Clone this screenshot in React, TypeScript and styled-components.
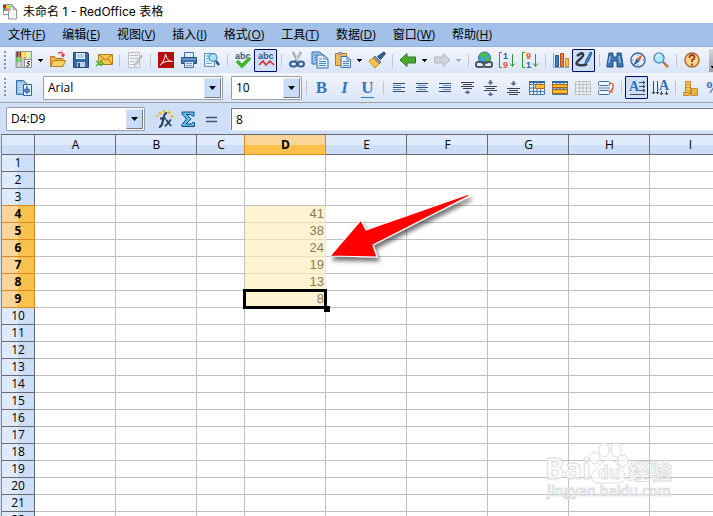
import React from "react";
import styled, { createGlobalStyle, css } from "styled-components";

const Global = createGlobalStyle`
  * { box-sizing: border-box; }
  body { margin: 0; background: #fff; }
  body, button, input, select {
    font-family: "Open Sans", "Noto Sans CJK SC", sans-serif;
    font-size: 12px;
    color: #000;
  }
`;

const Window = styled.div`
  display: flex;
  flex-direction: column;
  height: 100vh;
  overflow: hidden;
`;

const TitleBar = styled.header`
  display: flex;
  align-items: center;
  gap: 5px;
  height: 23px;
  padding: 0 2px;
  background: #fff;
  flex: none;
  h1 {
    margin: 0;
    font: 400 12px/22px Inter, "Noto Sans CJK SC", sans-serif;
  }
`;

const MenuBar = styled.nav`
  display: flex;
  gap: 17px;
  height: 23px;
  padding: 0 8px;
  background: #a2c0e8;
  flex: none;
`;

const MenuItem = styled.button`
  padding: 0;
  border: 0;
  background: none;
  line-height: 22px;
  white-space: nowrap;
`;

const Toolbar = styled.div<{ $tall?: boolean }>`
  display: flex;
  align-items: center;
  height: ${(p) => (p.$tall ? 29 : 27)}px;
  padding-left: 4px;
  background: linear-gradient(#f3f5fb, #d9e5f8);
  border-top: ${(p) => (p.$tall ? "0" : "1px solid #8fb0e0")};
  overflow: hidden;
  flex: none;
`;

const Grip = styled.span`
  width: 2px;
  height: 19px;
  margin-right: 6px;
  background: repeating-linear-gradient(#8b93a3 0 2px, transparent 2px 4px);
  flex: none;
`;

const ToolButton = styled.button<{ $on?: boolean }>`
  display: flex;
  align-items: center;
  justify-content: center;
  width: 23px;
  height: 23px;
  padding: 0;
  border: ${(p) => (p.$on ? "1px solid #000d5e" : "0")};
  border-radius: 1px;
  background: ${(p) => (p.$on ? "#cfdff8" : "none")};
  flex: none;
  svg { flex: none; overflow: visible; }
`;

const DropButton = styled.button`
  display: flex;
  align-items: center;
  justify-content: center;
  width: 11px;
  height: 23px;
  padding: 0;
  border: 0;
  background: none;
  flex: none;
`;

const Separator = styled.span`
  width: 8px;
  height: 13px;
  background: linear-gradient(#c2c6cd, #c2c6cd) center / 1px 100% no-repeat;
  flex: none;
`;

const Field = styled.div<{ $width: number; $gap?: number }>`
  display: flex;
  width: ${(p) => p.$width}px;
  height: 24px;
  margin-left: ${(p) => p.$gap || 0}px;
  padding: 1px;
  border: 1px solid #9a9da3;
  border-radius: 1px;
  background: #fff;
  flex: none;
  input, select {
    flex: 1;
    min-width: 0;
    padding: 0 3px;
    border: 0;
    outline: 0;
    appearance: none;
    background: #fff;
  }
`;

const FieldArrow = styled.button`
  display: flex;
  align-items: center;
  justify-content: center;
  width: 17px;
  padding: 0;
  border: 1px solid #dce8fa;
  border-right-color: #777b83;
  border-bottom-color: #777b83;
  background: #c8dbf7;
`;

const FormulaBar = styled.div`
  display: flex;
  align-items: center;
  height: 32px;
  padding-left: 6px;
  background: #cfdff7;
  border-top: 1px solid #9da1a8;
  flex: none;
`;

const FormulaTools = styled.div`
  display: flex;
  padding: 0 9px 0 8px;
`;

const FormulaInput = styled.input`
  flex: 1;
  min-width: 0;
  height: 22px;
  padding: 0 4px;
  border: 0;
  border-top: 1px solid #74777c;
  border-left: 1px solid #74777c;
  box-shadow: 0 0 0 1px #e3ebf7;
  outline: 0;
`;

const Sheet = styled.main`
  position: relative;
  flex: 1;
  min-height: 0;
  overflow: hidden;
  padding-left: 1px;
  background: #cfdff7;
`;

const Grid = styled.table`
  table-layout: fixed;
  width: 1px;
  border-collapse: separate;
  border-spacing: 0;
  border-top: 1px solid #64676c;
  border-left: 1px solid #85878b;
  background: #fff;
`;

const Col = styled.col<{ $width: number }>`
  width: ${(p) => p.$width}px;
`;

const headCell = css`
  padding: 0;
  font-size: 12px;
  text-align: center;
  line-height: 16px;
`;

const ColumnHead = styled.th<{ $selected?: boolean; $before?: boolean }>`
  ${headCell}
  height: 20px;
  padding-left: 1px;
  font-weight: ${(p) => (p.$selected ? 700 : 400)};
  background: ${(p) =>
    p.$selected
      ? "linear-gradient(#f9d698 50%, #fac14d 50%)"
      : "linear-gradient(#dfeafb 50%, #cddff8 50%)"};
  border-right: 1px solid ${(p) => (p.$selected || p.$before ? "#d88a20" : "#686a6e")};
  border-bottom: 1px solid ${(p) => (p.$selected ? "#d88a20" : "#686a6e")};
`;

const RowHead = styled.th<{ $selected?: boolean; $before?: boolean }>`
  ${headCell}
  height: 17px;
  font-weight: ${(p) => (p.$selected ? 700 : 400)};
  background: ${(p) =>
    p.$selected
      ? "linear-gradient(90deg, #f9d698 50%, #fac14d 50%)"
      : "linear-gradient(90deg, #dfeafb 50%, #cddff8 50%)"};
  border-right: 1px solid ${(p) => (p.$selected ? "#d88a20" : "#686a6e")};
  border-bottom: 1px solid ${(p) => (p.$selected || p.$before ? "#d88a20" : "#686a6e")};
`;

const Cell = styled.td<{ $selected?: boolean; $active?: boolean }>`
  height: 17px;
  padding: 0 1px 0 0;
  border-right: 1px solid #c0c0c0;
  border-bottom: 1px solid #c0c0c0;
  font: 13px/16px "Liberation Sans", Arial, sans-serif;
  text-align: right;
  ${(p) =>
    p.$selected &&
    css`
      color: #8b7b5c;
      background: #fdf3d1;
      border-right-color: #fbe9a6;
      border-bottom-color: #e9dfbd;
    `}
  ${(p) =>
    p.$active &&
    css`
      position: relative;
      &::before {
        content: "";
        position: absolute;
        inset: -2px;
        border: 3px solid #000;
      }
      &::after {
        content: "";
        position: absolute;
        right: -5px;
        bottom: -5px;
        width: 6px;
        height: 6px;
        background: #000;
      }
    `}
`;

const Pointer = styled.svg`
  position: absolute;
  left: 320px;
  top: 50px;
  pointer-events: none;
`;

const Watermark = styled.svg`
  position: absolute;
  left: 540px;
  top: 300px;
  pointer-events: none;
`;

const Down = ({ muted }: { muted?: boolean }) => (
  <svg width="5" height="3" viewBox="0 0 5 3" shapeRendering="crispEdges" aria-hidden="true">
    <path d="M0 0h5L2.5 3z" fill={muted ? "#a5a8ad" : "#000"} />
  </svg>
);

const BigDown = () => (
  <svg width="7" height="4" viewBox="0 0 7 4" aria-hidden="true">
    <path d="M0 0h7L3.500 4z" fill="#000" />
  </svg>
);

const Page = () => (
  <>
    <path d="M1 1h8l3 3v9H1z" fill="#9cc5f0" stroke="#336ca8" />
    <path d="M6 4h7l4 4v9H6z" fill="#e3f0fc" stroke="#336ca8" />
    <path d="M13 4v4h4M8 8h3M8 10.500h7M8 12.500h7M8 14.500h7M3 4h3M3 6.500h2M3 9h2" fill="none" stroke="#4c86c0" />
  </>
);

const Lines = ({ rows }: { rows: number[][] }) => (
  <g>
    {rows.map(([x, w], i) => (
      <path key={i} d={`M${x} ${4.5 + i * 2}h${w}`} stroke={i % 2 ? "#638bb5" : "#27507c"} />
    ))}
  </g>
);

const TableShape = ({ fill, line }: { fill: string; line: string }) => (
  <>
    <path d="M1.500 2.500h15v13h-15z" fill={fill} stroke={line} />
    <path d="M2 5.500h14M2 9h14M2 12.500h14M5.500 3v12M9 3v12M12.500 3v12" stroke={line} />
  </>
);

const art: Record<string, React.ReactNode> = {
  new: (
    <>
      <path d="M1 1h5v5H1z" fill="#9c222c" />
      <path d="M6 1h5v5H6z" fill="#f0e51f" />
      <path d="M11 1h5v5h-5z" fill="#dfe9b0" />
      <path d="M1 6h5v5H1z" fill="#56cf38" />
      <path d="M6 6h5v5H6z" fill="#ed8eac" />
      <path d="M11 6h5v4h-5z" fill="#c4e8a5" />
      <path d="M1 11h5v5H1z" fill="#a7c9b4" />
      <path d="M6 11h4v5H6z" fill="#d7a2a9" />
      <path d="M4 1v15M8 1v15M13 1v9" stroke="#fff" strokeOpacity=".35" strokeWidth="2" />
      <path d="M1 .5h15.500v16H1z" fill="none" stroke="#8f9992" />
      <path d="M9.500 8.500h7v8h-7z" fill="#fff" stroke="#87919b" />
      <path d="M15 10.500h-2l-1 1.500 2.500 1-1 2h-2.500" fill="none" stroke="#222" />
    </>
  ),
  open: (
    <>
      <path d="M1.500 15.500V5.500h4l1.500 2h7v3" fill="#ecb350" stroke="#ad761e" />
      <path d="M1.500 15.500l3-6h12l-2.500 6z" fill="#fbd064" stroke="#b87d1b" />
      <path d="M9 2.500q4-3 5.500 1.500" fill="none" stroke="#e33b32" strokeWidth="1.200" />
      <path d="M11.500 3.500h5l-2.500 3z" fill="#e33b32" />
    </>
  ),
  save: (
    <>
      <path d="M1.500 1.500h14l1 1v14H1.500z" fill="#326ba5" stroke="#23476f" />
      <path d="M4 2h9v6H4z" fill="#e9f1f9" />
      <path d="M5 4h7M5 6h7" stroke="#83a6cb" />
      <path d="M5 11h8v5H5z" fill="#bfd3e8" />
      <path d="M6 12h2v4H6z" fill="#274e7d" />
    </>
  ),
  mail: (
    <>
      <path d="M3.500 3.500h14v10h-14z" fill="#f9c84a" stroke="#b27d1d" />
      <path d="M4 4l6.500 5L17 4M4 13l4-5M17 13l-4-5" fill="none" stroke="#ad781d" />
      <path d="M1 10l3 2.500L1 15M5 10l3 2.500L5 15" fill="none" stroke="#3eb535" strokeWidth="1.500" />
    </>
  ),
  edit: (
    <>
      <path d="M2.500 1.500h11v15h-11z" fill="#eff1f4" stroke="#babec4" />
      <path d="M4 4.500h8M4 7.500h8M4 10.500h5M4 13.500h4" stroke="#b9bdc3" />
      <path d="M15.500 4L9 13l-1 2 2-1 6.500-9z" fill="#cfd2d7" stroke="#b0b4ba" />
    </>
  ),
  pdf: (
    <>
      <path d="M1 1h16v16H1z" fill="#b90d0d" />
      <path d="M3 14c2-1 5-6 5.500-11 1 5 4 8 7 7.500-4-1-9 0-12.500 3.500z" fill="none" stroke="#fff" />
    </>
  ),
  print: (
    <>
      <path d="M4.500 1.500h9v5h-9z" fill="#e2edf8" stroke="#456f9e" />
      <path d="M1.500 6.500h15v6h-15z" fill="#3c77b2" stroke="#264e7c" />
      <path d="M2 8h14" stroke="#88b4df" />
      <path d="M4.500 10.500h9v6h-9z" fill="#e7f0f8" stroke="#426c99" />
      <path d="M6 12.500h6M6 14.500h6" stroke="#7195bb" />
    </>
  ),
  preview: (
    <>
      <path d="M1.500 2.500h10v13h-10z" fill="#e9f3fd" stroke="#5b90c6" />
      <path d="M3 5h5M3 7.500h3M3 10h3M3 12.500h6" stroke="#6fa1d2" />
      <circle cx="10" cy="6.500" r="4" fill="#a4e1fb" stroke="#3b7dad" />
      <path d="M13 10l3 4" stroke="#2d5277" strokeWidth="2.500" />
    </>
  ),
  cut: (
    <>
      <path d="M5 1l5 9M13 1l-6 10" stroke="#98a2ab" strokeWidth="2.500" />
      <path d="M6 1l5 9M12 2L8 9" stroke="#dce1e5" />
      <ellipse cx="5.500" cy="13" rx="3.500" ry="2.500" fill="none" stroke="#315f95" strokeWidth="2" />
      <ellipse cx="13" cy="13" rx="3" ry="2.500" fill="none" stroke="#315f95" strokeWidth="2" />
    </>
  ),
  copy: <Page />,
  paste: (
    <>
      <path d="M1.500 2.500h11v12h-11z" fill="#f3bc57" stroke="#a97b2d" />
      <path d="M4 1h5v3H4z" fill="#93a2b1" />
      <path d="M7 5.500h6l3.500 3.500v7.500H7z" fill="#e2effb" stroke="#3b70a9" />
      <path d="M13 6v3h3M9 10.500h6M9 12.500h6M9 14.500h6" fill="none" stroke="#4d84bd" />
    </>
  ),
  brush: (
    <>
      <path d="M16 1l1.500 1.500-5 6-3-3z" fill="#315f98" stroke="#244777" />
      <path d="M7 5l6 6-2 2-6-6z" fill="#8597ad" stroke="#5a6b82" />
      <path d="M5 7l6 6-4 4-6-7z" fill="#fcc344" stroke="#c78b20" />
    </>
  ),
  back: <path d="M1 9l7-6.500V6h8.500v6H8v3.500z" fill="#4aa92c" stroke="#277c1b" />,
  forward: <path d="M17 9l-7-6.500V6H1.500v6H10v3.500z" fill="#ced1d6" stroke="#b6bac0" />,
  link: (
    <>
      <circle cx="9.500" cy="7" r="6" fill="#36a7df" stroke="#23709d" />
      <path d="M5 3l5-2 2 3-3 3-3 0zM11 7l4-1-1 5-3 1z" fill="#58c034" />
      <rect x="1" y="11" width="8" height="5" rx="2" fill="none" stroke="#50565e" strokeWidth="2" />
      <rect x="9" y="11" width="8" height="5" rx="2" fill="none" stroke="#50565e" strokeWidth="2" />
    </>
  ),
  chart: (
    <>
      <path d="M1.500 2v14.500H17" fill="none" stroke="#88a3bd" />
      <path d="M3.500 4.500h3v11h-3z" fill="#3b84ca" stroke="#24578e" />
      <path d="M8.500 2.500h3v13h-3z" fill="#f37a2c" stroke="#bf4a16" />
      <path d="M13.500 7.500h3v8h-3z" fill="#fac73c" stroke="#c88c19" />
    </>
  ),
  draw: (
    <>
      <path d="M2 5q5-4 6-2t-4 6 0 5 8-1" fill="none" stroke="#333b44" strokeWidth="2.500" />
      <path d="M15.500 1L17 2l-4 9-3 2 1-4z" fill="#448bd0" stroke="#275989" />
    </>
  ),
  find: (
    <>
      <path d="M3 2h4v4h4V2h4l2 12v2h-6v-6H7v6H1v-2z" fill="#3b78b5" stroke="#264e7d" />
      <path d="M4 5l-1 7M13 5l1 7" stroke="#94bee6" strokeWidth="1.500" />
    </>
  ),
  compass: (
    <>
      <circle cx="9" cy="9" r="7" fill="#e7f1fb" stroke="#416c9d" strokeWidth="1.500" />
      <path d="M9 3v2M9 13v2M3 9h2M13 9h2" stroke="#7a96b4" />
      <path d="M14 3L10.500 10.500 7.500 7.500z" fill="#e36a32" />
      <path d="M4 15l3.500-7.500 3 3z" fill="#2a65a7" />
    </>
  ),
  zoom: (
    <>
      <circle cx="7" cy="7" r="5" fill="#b1e7fb" stroke="#5298bd" strokeWidth="1.500" />
      <path d="M4 6q1-3 4-3" fill="none" stroke="#fff" />
      <path d="M11 11l2 2" stroke="#59748f" strokeWidth="2" />
      <path d="M12.500 12.500l3.500 3.500" stroke="#b97c42" strokeWidth="2.500" />
    </>
  ),
  help: (
    <>
      <circle cx="9" cy="9" r="7" fill="#fad68b" stroke="#ad6b36" strokeWidth="1.500" />
      <path d="M6.500 7q0-3 2.500-3t2.500 2.500Q11.500 8 9 9v2" fill="none" stroke="#a93b22" strokeWidth="1.800" />
      <path d="M8 12.500h2v2H8z" fill="#a93b22" />
    </>
  ),
  styles: (
    <>
      <path d="M1.500 1.500h7l3 3v11h-10z" fill="#92bee9" stroke="#356da6" />
      <path d="M3 5h6M3 7.500h6M3 10h6M3 12.500h6" stroke="#dceafa" />
      <path d="M8.500 5.500h8v11h-8z" fill="#e3f0fd" stroke="#366698" />
      <path d="M12 7v3M10 10.500h4v2h-4zM12 13v2" fill="none" stroke="#33679c" strokeWidth="1.500" />
    </>
  ),
  left: <Lines rows={[[3, 12], [3, 8], [3, 12], [3, 8], [3, 12]]} />,
  center: <Lines rows={[[3, 12], [5, 8], [3, 12], [5, 8], [3, 12]]} />,
  right: <Lines rows={[[3, 12], [7, 8], [3, 12], [7, 8], [3, 12]]} />,
  top: (
    <>
      <path d="M2 3.500h13M4 5.500h9M2 7.500h13M4 9.500h9" stroke="#3a424d" />
      <path d="M8.500 11l3 3h-2v1h-2v-1h-2z" fill="#5b6d94" />
    </>
  ),
  middle: (
    <>
      <path d="M2 7.500h13M4 9.500h9M2 11.500h13" stroke="#3a424d" />
      <path d="M5.500 3h2V1h2v2h2l-3 3zM8.500 13l3 3h-2v1h-2v-1h-2z" fill="#5b6d94" />
    </>
  ),
  bottom: (
    <>
      <path d="M2 9.500h13M4 11.500h9M2 13.500h13M4 15.500h9" stroke="#3a424d" />
      <path d="M5.500 4h2V2h2v2h2l-3 3z" fill="#5b6d94" />
    </>
  ),
  mergeOne: (
    <>
      <TableShape fill="#edf5fd" line="#3f78ae" />
      <path d="M1 2h16v2H1z" fill="#30659d" />
      <path d="M7.500 5.500h9v4h-9z" fill="#fcbd3e" stroke="#b46e18" />
    </>
  ),
  mergeAll: (
    <>
      <TableShape fill="#edf5fd" line="#3f78ae" />
      <path d="M1 2h16v2H1z" fill="#30659d" />
      <path d="M1.500 5.500h15v3h-15zM1.500 10.500h15v4h-15z" fill="#fcb832" stroke="#a96617" />
    </>
  ),
  split: <TableShape fill="#eef0f3" line="#bcc0c6" />,
  wrap: (
    <>
      <rect x="1.500" y="2.500" width="11" height="4" rx="1" fill="#f2f7fd" stroke="#426d9d" />
      <rect x="1.500" y="11.500" width="11" height="4" rx="1" fill="#f2f7fd" stroke="#426d9d" />
      <path d="M1 9h12" stroke="#6188b3" />
      <path d="M13 4q4 0 3 5l-2 3" fill="none" stroke="#e9642a" strokeWidth="1.500" />
      <path d="M12 13l4 1-1-4z" fill="#e9642a" />
    </>
  ),
  coins: (
    <>
      <path d="M3.500 2.500h5v13h-5z" fill="#f9c953" stroke="#c48a2c" />
      <path d="M1.500 13.500h6v3h-6zM9.500 9.500h6v7h-6z" fill="#f6bc44" stroke="#c48a2c" />
      <path d="M4 5.500h4M4 8.500h4M4 11.500h4M10 12h5M10 14.500h5" stroke="#d79c39" />
    </>
  ),
  sum: (
    <path d="M3 2h12v4h-2l-1-1.500H7.500L12 9l-5 5h5.500l1-1.500h2v4H3v-2L7.500 9 3 4z" fill="#5eb9e5" stroke="#164d82" />
  ),
  equals: <path d="M4 7.500h11M4 11.500h11" stroke="#3b5368" strokeWidth="1.500" />,
  fx: (
    <>
      <path d="M3 17q3 0 4-7t4-7M4 8.500h6" fill="none" stroke="#243d57" strokeWidth="2" />
      <path d="M10 9.500l5 6.500M15 9.500l-6 7" stroke="#243d57" strokeWidth="1.800" />
      <path d="M4 2l1 1.500L4 5 3 3.500zM8 0l1 1.500L8 3 7 1.500zM13 1l1.500 1.500L13 4l-1.500-1.500zM16 5l1 1-1 2-1-2zM1 5l1 1-1 1-1-1z" fill="#f1b91a" stroke="#f1b91a" />
    </>
  ),
};

const Letters = styled.span<{ $kind: "bold" | "italic" | "underline" | "percent" }>`
  color: #3477bd;
  font: ${(p) => (p.$kind === "italic" ? "italic" : "normal")} bold 17px/19px "Liberation Serif", serif;
  border-bottom: ${(p) => (p.$kind === "underline" ? "1px solid #3477bd" : "0")};
`;

const SmallLabel = styled.text`
  font: bold 9px "Liberation Sans", Arial, sans-serif;
`;

const TallLabel = styled.text`
  font: bold 14px "Liberation Serif", serif;
`;

const SpellLabel = styled.text`
  font: bold 9px "Liberation Sans", sans-serif;
`;

const Spell = ({ wave }: { wave?: boolean }) => (
  <>
    <SpellLabel x="1" y="8" fill="#355b83">abc</SpellLabel>
    {wave ? (
      <path d="M2 14l4-4 3 4 4-4 4 4" fill="none" stroke="#e13035" strokeWidth="1.500" />
    ) : (
      <path d="M3 10l5 5 8-8" fill="none" stroke="#43b52b" strokeWidth="3.500" />
    )}
  </>
);

const Sort = ({ down }: { down?: boolean }) => (
  <>
    <path d="M4 1.500H1.500v15H4M14.500 3v12M12 12.500l2.500 3 2.500-3" fill="none" stroke="#2f963b" />
    <SmallLabel x="5" y="8" fill={down ? "#df5a2d" : "#2b62a3"}>{down ? 9 : 1}</SmallLabel>
    <SmallLabel x="5" y="17" fill={down ? "#2b62a3" : "#df5a2d"}>{down ? 1 : 9}</SmallLabel>
  </>
);

const Direction = ({ vertical }: { vertical?: boolean }) =>
  vertical ? (
    <>
      <path d="M2.500 2v13M6.500 2v13M10.500 12v4M15.500 12v4M1 13l1.500 2L4 13M5 13l1.500 2L8 13M9 14l1.500 2 1.500-2M14 14l1.500 2 1.500-2" fill="none" stroke="#3e4c5d" />
      <TallLabel x="8" y="11" fill="#2e70b2">A</TallLabel>
    </>
  ) : (
    <>
      <TallLabel x="1" y="12" fill="#2e70b2">A</TallLabel>
      <path d="M11 3.500h6M11 7.500h6M11 11.500h6M2 15.500h15M15 2l2 1.500L15 5M15 6l2 1.500L15 9M15 10l2 1.500-2 1.500" fill="none" stroke="#3e4c5d" />
    </>
  );

art.spell = <Spell />;
art.autospell = <Spell wave />;
art.ascending = <Sort />;
art.descending = <Sort down />;
art.horizontal = <Direction />;
art.vertical = <Direction vertical />;

const Tool = ({ name, on }: { name: string; on?: boolean }) => (
  <ToolButton $on={on} aria-label={name} aria-pressed={on}>
    <svg width="18" height="18" viewBox="0 0 18 18" aria-hidden="true">{art[name]}</svg>
  </ToolButton>
);

const Drop = ({ label, muted }: { label: string; muted?: boolean }) => (
  <DropButton aria-label={label} disabled={muted}>
    <Down muted={muted} />
  </DropButton>
);

const Tools = ({ items }: { items: string }) => (
  <>
    {items.split(" ").map((item, i) => {
      if (item === "|") return <Separator key={i} />;
      if (item === "v") return <Drop key={i} label="more options" />;
      if (item === "-v") return <Drop key={i} label="more options" muted />;
      return item.startsWith("*") ? <Tool key={i} name={item.slice(1)} on /> : <Tool key={i} name={item} />;
    })}
  </>
);

const MoreButton = styled.button`
  display: flex;
  align-items: flex-end;
  width: 12px;
  height: 23px;
  margin-left: 6px;
  padding: 0 2px 3px;
  border: 0;
  background: linear-gradient(#d5d7dc, #9b9ea5);
  flex: none;
`;

const menus = [
  ["文件", "F"], ["编辑", "E"], ["视图", "V"], ["插入", "I"], ["格式", "O"],
  ["工具", "T"], ["数据", "D"], ["窗口", "W"], ["帮助", "H"],
];

const columns = "ABCDEFGHIJKLMN".split("");
const values: Record<number, number> = { 4: 41, 5: 38, 6: 24, 7: 19, 8: 13, 9: 8 };
const rowNumbers = Array.from({ length: 40 }, (_, i) => i + 1);

export default function App() {
  return (
    <Window>
      <Global />
      <TitleBar>
        <svg width="16" height="17" viewBox="0 0 16 17" aria-hidden="true">
          <path d="M1.500 1.500h9v10h-9z" fill="#fff" stroke="#8c939b" />
          <path d="M6.500 3.500h5l3 3v9.500h-8z" fill="#f4f6f8" stroke="#8c939b" />
          <path d="M11.500 3.500v3h3" fill="none" stroke="#8c939b" />
          <path d="M1 2h3v3H1z" fill="#b9273a" />
          <path d="M4 2h3v3H4z" fill="#e5db2c" />
          <path d="M1 5h3v3H1z" fill="#3cb83c" />
          <path d="M4 5h3v3H4z" fill="#e9809f" />
          <path d="M7 2h2v6H7z" fill="#a5d997" />
        </svg>
        <h1>未命名 1 - RedOffice 表格</h1>
      </TitleBar>
      <MenuBar>
        {menus.map(([name, key]) => (
          <MenuItem key={key}>{name}(<u>{key}</u>)</MenuItem>
        ))}
      </MenuBar>
      <Toolbar>
        <Grip />
        <Tools items="new v open save mail | edit | pdf print preview | spell *autospell | cut copy paste v brush | back v forward -v | link ascending descending | chart *draw | find compass zoom | help" />
        <MoreButton aria-label="more tools"><Down /></MoreButton>
      </Toolbar>
      <Toolbar $tall>
        <Grip />
        <Tool name="styles" />
        <Field $width={180} $gap={8}>
          <select aria-label="字体" defaultValue="Arial"><option>Arial</option></select>
          <FieldArrow tabIndex={-1} aria-label="字体列表"><BigDown /></FieldArrow>
        </Field>
        <Field $width={71} $gap={8}>
          <select aria-label="字号" defaultValue="10"><option>10</option></select>
          <FieldArrow tabIndex={-1} aria-label="字号列表"><BigDown /></FieldArrow>
        </Field>
        <Separator />
        <ToolButton aria-label="bold"><Letters $kind="bold">B</Letters></ToolButton>
        <ToolButton aria-label="italic"><Letters $kind="italic">I</Letters></ToolButton>
        <ToolButton aria-label="underline"><Letters $kind="underline">U</Letters></ToolButton>
        <Tools items="| left center right top middle bottom mergeOne mergeAll split wrap | *horizontal vertical | coins" />
        <ToolButton aria-label="percent"><Letters $kind="percent">%</Letters></ToolButton>
      </Toolbar>
      <FormulaBar>
        <Field $width={139}>
          <input aria-label="名称框" defaultValue="D4:D9" />
          <FieldArrow aria-label="名称列表"><BigDown /></FieldArrow>
        </Field>
        <FormulaTools><Tools items="fx sum equals" /></FormulaTools>
        <FormulaInput aria-label="输入行" defaultValue="8" />
      </FormulaBar>
      <Sheet>
        <Grid>
          <colgroup>
            <Col $width={33} />
            {columns.map((c) => <Col key={c} $width={c === "C" ? 48 : 81} />)}
          </colgroup>
          <thead>
            <tr>
              <ColumnHead aria-label="全选" />
              {columns.map((c) => (
                <ColumnHead key={c} scope="col" $selected={c === "D"} $before={c === "C"}>{c}</ColumnHead>
              ))}
            </tr>
          </thead>
          <tbody>
            {rowNumbers.map((r) => (
              <tr key={r}>
                <RowHead scope="row" $selected={r in values} $before={r === 3}>{r}</RowHead>
                {columns.map((c) => {
                  const selected = c === "D" && r in values;
                  return (
                    <Cell key={c} $selected={selected} $active={selected && r === 9}>
                      {selected ? values[r] : null}
                    </Cell>
                  );
                })}
              </tr>
            ))}
          </tbody>
        </Grid>
        <Pointer width="160" height="90" viewBox="0 0 160 90" aria-hidden="true">
          <defs>
            <filter id="shade" x="-10%" y="-20%" width="130%" height="150%">
              <feDropShadow dx="2" dy="4" stdDeviation="2" floodColor="#000" floodOpacity=".55" />
            </filter>
          </defs>
          <path d="M10 72L41 36l5 10L149 10v2L53 61l4 12z" fill="#fe0000" stroke="#fff" strokeWidth="1.200" strokeLinejoin="round" filter="url(#shade)" />
        </Pointer>
        <Watermark width="150" height="75" viewBox="0 0 150 75" aria-hidden="true">
          <g fill="#fff" fillOpacity=".7" stroke="#dcdcdc" strokeWidth="1">
            <text x="5" y="45" fontFamily="Open Sans" fontWeight="700" fontSize="29">Bai</text>
            <ellipse cx="55" cy="24" rx="5" ry="6" />
            <ellipse cx="64" cy="16" rx="5" ry="7" />
            <ellipse cx="76" cy="16" rx="5" ry="7" />
            <ellipse cx="83" cy="27" rx="5" ry="6" />
            <path d="M69 26c8 0 9 7 14 11 5 6 1 12-5 12H59c-8 0-10-7-5-12 5-4 7-11 15-11z" />
            <text x="58" y="45" fontFamily="Open Sans" fontWeight="700" fontSize="17">du</text>
            <text x="88" y="45" fontFamily="Noto Sans CJK SC" fontWeight="700" fontSize="22">经验</text>
            <text x="7" y="62" fontFamily="Open Sans" fontWeight="600" fontSize="14">jingyan.baidu.com</text>
          </g>
        </Watermark>
      </Sheet>
    </Window>
  );
}
